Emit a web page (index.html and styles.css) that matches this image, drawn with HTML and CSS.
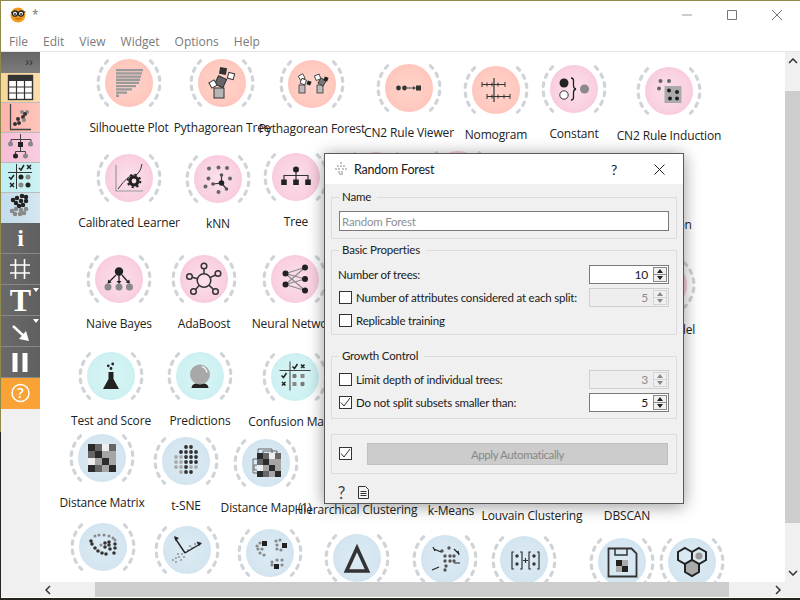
FILE: index.html
```html
<!DOCTYPE html>
<html lang="en">
<head>
  <meta charset="UTF-8" />
  <title>Orange</title>
  <link rel="stylesheet" href="styles.css">
</head>
<body>
  <svg class="defs" width="0" height="0">
    <defs>
      <g id="ring" fill="none" stroke="#d0d4d8" stroke-width="3.200" stroke-linecap="round" stroke-dasharray="3.400 5.900">
        <path d="M-21.400 -22.200A30.800 30.800 0 0 0 -21.400 22.200" />
        <path d="M21.400 -22.200A30.800 30.800 0 0 1 21.400 22.200" />
      </g>
    </defs>
  </svg>

  <div class="window">
    <div class="titlebar">
      <svg class="logo" viewBox="0 0 16 16" width="16" height="16">
        <circle cx="8" cy="8" r="7.5" fill="#f39a1e" />
        <circle cx="5" cy="6.6" r="2.6" fill="#fff" stroke="#222" stroke-width="1.3" />
        <circle cx="11" cy="6.6" r="2.6" fill="#fff" stroke="#222" stroke-width="1.3" />
        <path d="M1 5.6l2-.6M7.6 6.4h1M13.4 5.6l2-1" stroke="#222" fill="none" />
        <circle cx="5" cy="7" r="1" fill="#222" />
        <circle cx="11" cy="7" r="1" fill="#222" />
        <path d="M5.5 11.5q3 1.2 5.500 0" stroke="#b55f00" fill="none" />
      </svg>
      <span class="doc-name">*</span>
      <div class="win-controls">
        <svg viewBox="0 0 10 10" width="10" height="10"><path d="M0 5h10" stroke="#999" fill="none" /></svg>
        <svg viewBox="0 0 10 10" width="10" height="10"><path d="M.5.500h9v9h-9z" stroke="#777" fill="none" /></svg>
        <svg viewBox="0 0 10 10" width="10" height="10"><path d="M0 0l10 10M10 0l-10 10" stroke="#777" fill="none" /></svg>
      </div>
    </div>

    <div class="menubar">
      <span>File</span>
      <span>Edit</span>
      <span>View</span>
      <span>Widget</span>
      <span>Options</span>
      <span>Help</span>
    </div>

    <div class="main">
      <div class="toolbar">
        <div class="dock-head">››</div>
        <div class="cat cat-data">
          <svg viewBox="0 0 38 30" width="38" height="30">
            <rect x="7.500" y="2.500" width="24" height="24" fill="#fff" stroke="#333" stroke-width="1.4" />
            <rect x="7" y="2" width="25" height="6" fill="#333" />
            <path d="M15.500 8v18M23.500 8v18M8 14h23M8 20h23" stroke="#333" stroke-width="1.2" fill="none" />
          </svg>
        </div>
        <div class="cat cat-vis">
          <svg viewBox="0 0 38 30" width="38" height="30">
            <path d="M9.500 1v25.500H30" stroke="#444" stroke-width="1.3" fill="none" />
            <path class="dots" d="M14 21h0M18 20h0M17 16h0M22 14h0" stroke="#333" stroke-width="4" />
            <path class="dots" d="M21 9h0M26 9h0M23 17h0" stroke="#888" stroke-width="4" />
            <path class="dots" d="M24 11h0" stroke="#333" stroke-width="4" />
          </svg>
        </div>
        <div class="cat cat-model">
          <svg viewBox="0 0 38 30" width="38" height="30">
            <path d="M19.500 1v9M10 6.500h20V10M10 6.500V10M19.500 14v5M14.500 21v-2.500h10V21" stroke="#444" fill="none" />
            <rect x="17" y="9" width="5" height="5" fill="#222" />
            <path class="dots" d="M9.500 11h0M29.500 11h0M24.500 23h0" stroke="#888" stroke-width="5" />
            <path class="dots" d="M14.500 23h0" stroke="#222" stroke-width="5" />
          </svg>
        </div>
        <div class="cat cat-eval">
          <svg viewBox="0 0 38 30" width="38" height="30">
            <path d="M7 9.500h24M15.500 1v25" stroke="#333" fill="none" />
            <path d="M18 5l2 2 3-5M8 14l2 2 3-4" stroke="#222" stroke-width="1.500" fill="none" />
            <path d="M26 2l4 4M30 2l-4 4M9 20l4 4M13 20l-4 4" stroke="#222" stroke-width="1.500" fill="none" />
            <path class="dots" d="M20 14h0M27 22h0" stroke="#222" stroke-width="5" />
            <path class="dots" d="M27 14h0M20 22h0" stroke="#888" stroke-width="5" />
          </svg>
        </div>
        <div class="cat cat-unsup">
          <svg viewBox="0 0 38 30" width="38" height="30">
            <path class="dots" d="M12 7h0M16 5h0M21 3h0M25 4h0M15 10h0M20 8h0M25 8h0M18 13h0M22 12h0" stroke="#222" stroke-width="4.500" />
            <path class="dots" d="M11 18h0M15 16h0M20 17h0M25 16h0M14 21h0M19 21h0M23 20h0" stroke="#888" stroke-width="4.500" />
          </svg>
        </div>

        <div class="tool"><span class="glyph-i">i</span></div>
        <div class="tool">
          <svg viewBox="0 0 38 30" width="38" height="30"><path d="M14.500 5v20M23.500 5v20M9 11h20M9 19h20" stroke="#fff" stroke-width="1.600" fill="none" /></svg>
        </div>
        <div class="tool has-menu"><span class="glyph-t">T</span></div>
        <div class="tool has-menu">
          <svg viewBox="0 0 38 30" width="38" height="30"><path d="M12 10l13 12" stroke="#fff" stroke-width="2.400" fill="none" /><path d="M28 25l-3-10-7 8z" fill="#fff" /></svg>
        </div>
        <div class="tool">
          <svg viewBox="0 0 38 30" width="38" height="30"><path d="M11.500 6h5v19h-5zM21.500 6h5v19h-5z" fill="#fff" /></svg>
        </div>
        <div class="tool tool-help">
          <svg viewBox="0 0 38 30" width="38" height="30">
            <circle cx="19.500" cy="15" r="8.500" fill="none" stroke="#fff" stroke-width="1.500" />
            <text x="19.500" y="20" class="help-mark">?</text>
          </svg>
        </div>
      </div>

      <div class="canvas">
        <!-- row 1 -->
        <div class="node vis silhouette">
          <div class="disc"><svg class="ring" viewBox="-32 -32 64 64"><use href="#ring" /></svg>
            <svg class="icon" viewBox="0 0 48 48"><path d="M11 10h27v2.300H11zM11 13.200h26v2.300H11zM11 16.400h25v2.300H11zM11 19.600h24v2.300H11zM11 22.800h23v2.300H11zM11 26h20v2.300H11zM11 29.200h16v2.300H11zM11 32.400h11v2.300H11zM11 35.600h3v2.300h-3z" fill="#9a9a9a" /></svg>
          </div>
          <span class="node-label">Silhouette Plot</span>
        </div>
        <div class="node vis pytree">
          <div class="disc"><svg class="ring" viewBox="-32 -32 64 64"><use href="#ring" /></svg>
            <svg class="icon" viewBox="0 0 48 48">
              <rect x="16" y="29" width="10" height="10" fill="#b5b5b5" stroke="#333" />
              <rect x="18" y="18" width="9" height="9" fill="#666" stroke="#333" transform="rotate(25 22 23)" />
              <rect x="12" y="22" width="6" height="6" fill="#fff" stroke="#333" transform="rotate(-30 15 25)" />
              <rect x="21.500" y="8.500" width="7" height="7" fill="#333" transform="rotate(10 25 12)" />
              <rect x="30" y="14" width="6" height="6" fill="#fff" stroke="#333" transform="rotate(15 33 17)" />
            </svg>
          </div>
          <span class="node-label">Pythagorean Tree</span>
        </div>
        <div class="node vis pyforest">
          <div class="disc"><svg class="ring" viewBox="-32 -32 64 64"><use href="#ring" /></svg>
            <svg class="icon" viewBox="0 0 48 48">
              <rect x="11" y="25" width="6" height="8" fill="#bbb" stroke="#333" stroke-width=".8" />
              <rect x="11" y="15" width="5" height="5" fill="#fff" stroke="#333" stroke-width=".8" transform="rotate(-30 13 17)" />
              <rect x="13" y="19" width="5" height="5" fill="#fff" stroke="#333" stroke-width=".8" transform="rotate(20 15 21)" />
              <rect x="19" y="21" width="4" height="4" fill="#222" transform="rotate(20 21 23)" />
              <rect x="29" y="25" width="6" height="8" fill="#bbb" stroke="#333" stroke-width=".8" />
              <rect x="31" y="19" width="6" height="6" fill="#777" stroke="#333" stroke-width=".8" transform="rotate(30 34 22)" />
              <rect x="27" y="15" width="5" height="5" fill="#fff" stroke="#333" stroke-width=".8" transform="rotate(-20 29 17)" />
              <rect x="36" y="17" width="4" height="4" fill="#222" transform="rotate(20 38 19)" />
            </svg>
          </div>
          <span class="node-label">Pythagorean Forest</span>
        </div>
        <div class="node vis cn2viewer">
          <div class="disc"><svg class="ring" viewBox="-32 -32 64 64"><use href="#ring" /></svg>
            <svg class="icon" viewBox="0 0 48 48">
              <path class="dots" d="M13.500 24h0M19.500 24h0" stroke="#333" stroke-width="4.800" />
              <path d="M22 24h8" stroke="#444" fill="none" /><path d="M31 24l-3-2v4z" fill="#444" />
              <rect x="31" y="21.500" width="5" height="5" fill="#333" />
            </svg>
          </div>
          <span class="node-label">CN2 Rule Viewer</span>
        </div>
        <div class="node vis nomogram">
          <div class="disc"><svg class="ring" viewBox="-32 -32 64 64"><use href="#ring" /></svg>
            <svg class="icon" viewBox="0 0 48 48">
              <path d="M22 12v24M10 18.500h23M15 30.500h23" stroke="#333" stroke-width="1.200" fill="none" />
              <path d="M10 16v5M15 16.500v4M20 16.500v4M26 16.500v4M33 16v5M15 28v5M20 28.500v4M26 28.500v4M32 28.500v4M38 28v5" stroke="#333" fill="none" />
            </svg>
          </div>
          <span class="node-label">Nomogram</span>
        </div>
        <div class="node model constant">
          <div class="disc"><svg class="ring" viewBox="-32 -32 64 64"><use href="#ring" /></svg>
            <svg class="icon" viewBox="0 0 48 48">
              <circle cx="14" cy="18" r="4.500" fill="#222" />
              <circle cx="14" cy="30" r="4.200" fill="#fff" stroke="#333" />
              <path d="M21 13q2.500 0 2.500 2.500v5q0 3 2.500 3.500q-2.500.5-2.500 3.500v5q0 2.500-2.500 2.500" stroke="#222" stroke-width="1.300" fill="none" />
              <circle cx="34.500" cy="24" r="4.500" fill="#8a8a8a" />
            </svg>
          </div>
          <span class="node-label">Constant</span>
        </div>
        <div class="node model cn2induction">
          <div class="disc"><svg class="ring" viewBox="-32 -32 64 64"><use href="#ring" /></svg>
            <svg class="icon" viewBox="0 0 48 48">
              <rect x="19.500" y="19" width="17" height="17" fill="#aaa" />
              <path class="dots" d="M24 23.500h0M32 25h0M25 31.500h0M32 31.500h0" stroke="#222" stroke-width="4" />
              <path class="dots" d="M15.500 14h0M24 14h0M14 21.500h0" stroke="#666" stroke-width="4" />
            </svg>
          </div>
          <span class="node-label">CN2 Rule Induction</span>
        </div>

        <!-- row 2 -->
        <div class="node model calibrated">
          <div class="disc"><svg class="ring" viewBox="-32 -32 64 64"><use href="#ring" /></svg>
            <svg class="icon" viewBox="0 0 48 48">
              <path d="M11 11v26h27" stroke="#999" stroke-width="1.200" fill="none" />
              <path d="M13 35q10-14 16-14t8-11" stroke="#333" fill="none" />
              <circle cx="29" cy="27" r="4" fill="none" stroke="#222" stroke-width="3.200" />
              <circle cx="29" cy="27" r="6.300" fill="none" stroke="#222" stroke-width="2" stroke-dasharray="2.200 2.750" />
            </svg>
          </div>
          <span class="node-label">Calibrated Learner</span>
        </div>
        <div class="node model knn">
          <div class="disc"><svg class="ring" viewBox="-32 -32 64 64"><use href="#ring" /></svg>
            <svg class="icon" viewBox="0 0 48 48">
              <path d="M27.500 20v8l-8.500 1M27.500 28l5 6" stroke="#333" stroke-width="1.200" fill="none" />
              <path class="dots" d="M15 13.500h0M24.500 12.500h0M36 23.500h0M14.500 23.500h0M11.500 31.500h0M24.500 37h0M33 13h0" stroke="#666" stroke-width="4" />
              <path class="dots" d="M27.500 20h0M19 29h0M32.500 34h0" stroke="#555" stroke-width="3.600" />
              <path class="dots" d="M27.500 28h0" stroke="#222" stroke-width="5.500" />
            </svg>
          </div>
          <span class="node-label">kNN</span>
        </div>
        <div class="node model tree">
          <div class="disc"><svg class="ring" viewBox="-32 -32 64 64"><use href="#ring" /></svg>
            <svg class="icon" viewBox="0 0 48 48">
              <path d="M24 17v10M12 27v-4.500h24V27" stroke="#333" stroke-width="1.200" fill="none" />
              <circle cx="24" cy="16.500" r="3" fill="#222" />
              <path d="M9.200 26.500h5.600v5.600H9.200zM21.200 26.500h5.600v5.600h-5.600zM33.200 26.500h5.600v5.600h-5.600z" fill="#222" />
            </svg>
          </div>
          <span class="node-label">Tree</span>
        </div>
        <div class="node model random-forest">
          <div class="disc"><svg class="ring" viewBox="-32 -32 64 64"><use href="#ring" /></svg></div>
          <span class="node-label">Random Forest</span>
        </div>
        <div class="node model gradient">
          <div class="disc"><svg class="ring" viewBox="-32 -32 64 64"><use href="#ring" /></svg></div>
          <span class="node-label">Gradient Boosting</span>
        </div>
        <div class="node model logistic">
          <div class="disc"></div>
          <span class="node-label">Logistic Regression</span>
        </div>

        <!-- row 3 -->
        <div class="node model naive">
          <div class="disc"><svg class="ring" viewBox="-32 -32 64 64"><use href="#ring" /></svg>
            <svg class="icon" viewBox="0 0 48 48">
              <path d="M24 18v9M21 20l-7 7M27 20l6 7" stroke="#222" stroke-width="1.300" fill="none" />
              <path d="M24 29l-2.500-3h5zM12.500 28.500l.8-4 3.200 3.200zM35 28.500l-.8-4-3.200 3.200z" fill="#222" />
              <circle cx="24" cy="16.500" r="4.200" fill="#222" />
              <path class="dots" d="M13 32h0M24 32h0M34.500 32h0" stroke="#888" stroke-width="7" />
            </svg>
          </div>
          <span class="node-label">Naive Bayes</span>
        </div>
        <div class="node model ada">
          <div class="disc"><svg class="ring" viewBox="-32 -32 64 64"><use href="#ring" /></svg>
            <svg class="icon" viewBox="0 0 48 48" fill="none" stroke="#333" stroke-width="1.500">
              <circle cx="24" cy="25.500" r="6.800" />
              <circle cx="24" cy="11" r="2.800" /><circle cx="38" cy="18.500" r="2.800" /><circle cx="35.500" cy="36.500" r="2.800" /><circle cx="13.500" cy="36.500" r="2.800" /><circle cx="9.500" cy="21.500" r="2.800" />
              <path d="M24 14v4.700M35.500 20l-5.500 2.600M33.500 34.500l-4.500-4.400M15.500 34.500l4-4.200M12.500 22.300l4.800 1.500" />
            </svg>
          </div>
          <span class="node-label">AdaBoost</span>
        </div>
        <div class="node model neural">
          <div class="disc"><svg class="ring" viewBox="-32 -32 64 64"><use href="#ring" /></svg>
            <svg class="icon" viewBox="0 0 48 48">
              <path d="M14.500 18.500L34 12.500M14.500 18.500L34 24M14.500 18.500L34 35.500M14.500 29.500L34 12.500M14.500 29.500L34 24M14.500 29.500L34 35.500" stroke="#8a8a8a" stroke-width="1.200" fill="none" />
              <path class="dots" d="M14.500 18.500h0M14.500 29.500h0M34 12.500h0M34 24h0M34 35.500h0" stroke="#222" stroke-width="6" />
            </svg>
          </div>
          <span class="node-label">Neural Network</span>
        </div>
        <div class="node model load-model">
          <div class="disc"><svg class="ring" viewBox="-32 -32 64 64"><use href="#ring" /></svg></div>
          <span class="node-label">Load Model</span>
        </div>

        <!-- row 4 -->
        <div class="node eval test">
          <div class="disc"><svg class="ring" viewBox="-32 -32 64 64"><use href="#ring" /></svg>
            <svg class="icon" viewBox="0 0 48 48">
              <path d="M21.500 20h5v7l5.500 10h-16l5.500-10z" fill="#222" />
              <path class="dots" d="M25.700 12h0M21.300 13.800h0M24 16.500h0" stroke="#222" stroke-width="2.800" />
            </svg>
          </div>
          <span class="node-label">Test and Score</span>
        </div>
        <div class="node eval predictions">
          <div class="disc"><svg class="ring" viewBox="-32 -32 64 64"><use href="#ring" /></svg>
            <svg class="icon" viewBox="0 0 48 48">
              <path d="M15.500 36q0-5 8.500-5t8.500 5z" fill="#222" />
              <circle cx="24" cy="22.500" r="10" fill="#a8a8a8" />
              <path d="M26 14.500q4 1.500 5 6" stroke="#eee" stroke-width="1.500" fill="none" />
            </svg>
          </div>
          <span class="node-label">Predictions</span>
        </div>
        <div class="node eval confusion">
          <div class="disc"><svg class="ring" viewBox="-32 -32 64 64"><use href="#ring" /></svg>
            <svg class="icon" viewBox="0 0 48 48">
              <path d="M8.500 17.500h31M19 8.500v29" stroke="#444" fill="none" />
              <path d="M21.500 13.500l2 2 3-4.500M10.500 22.500l2 2 3-4.500" stroke="#222" stroke-width="1.500" fill="none" />
              <path d="M30 11.500l3.500 3.500M33.500 11.500L30 15M11 29l3.500 3.500M14.500 29L11 32.500" stroke="#222" stroke-width="1.500" fill="none" />
              <path class="dots" d="M23.500 23h0M31.500 31h0" stroke="#777" stroke-width="4.400" />
              <path d="M29.500 21h4v4h-4zM21.500 29h4v4h-4z" fill="#888" />
            </svg>
          </div>
          <span class="node-label">Confusion Matrix</span>
        </div>

        <!-- row 5 -->
        <div class="node unsup distmatrix">
          <div class="disc"><svg class="ring" viewBox="-32 -32 64 64"><use href="#ring" /></svg>
            <svg class="icon" viewBox="0 0 48 48" shape-rendering="crispEdges">
              <path d="M10 10h7v7h-7zM24 17h-7v7h7zM24 24h7v7h-7zM10 31h7v7h-7zM31 31h7v7h-7z" fill="#2b2b2b" />
              <path d="M17 10h7v7h-7zM31 10h7v7h-7zM10 17h7v7h-7zM17 31h7v7h-7z" fill="#666" />
              <path d="M24 17h7v7h-7zM17 24h7v7h-7zM24 31h7v7h-7zM31 17h7v7h-7zM31 24h7v7h-7z" fill="#a5a5a5" />
              <path d="M24 10h7v7h-7zM10 24h7v7h-7z" fill="#eee" />
            </svg>
          </div>
          <span class="node-label">Distance Matrix</span>
        </div>
        <div class="node unsup tsne">
          <div class="disc"><svg class="ring" viewBox="-32 -32 64 64"><use href="#ring" /></svg>
            <svg class="icon" viewBox="0 0 48 48">
              <path class="dots" d="M24 10h0M29 10h0M19 15h0M24 15h0M29 15h0M34 15h0M24 20h0M29 20h0M34 20h0M24 25h0M29 25h0M34 25h0M24 30h0M24 35h0M29 35h0" stroke="#333" stroke-width="3.800" />
              <path class="dots" d="M14 20h0M19 20h0M14 25h0M19 25h0M14 30h0M19 30h0M29 30h0M34 30h0M19 35h0" stroke="#aaa" stroke-width="3.800" />
            </svg>
          </div>
          <span class="node-label">t-SNE</span>
        </div>
        <div class="node unsup distmap">
          <div class="disc"><svg class="ring" viewBox="-32 -32 64 64"><use href="#ring" /></svg>
            <svg class="icon" viewBox="0 0 48 48">
              <path d="M16 14v-4h14v4M21 14v-2h14v2M15 20h-4v14h4M15 26h-3v5h3" stroke="#666" fill="none" />
              <g shape-rendering="crispEdges">
                <path d="M15 14h6v6h-6zM21 20h6v6h-6zM27 26h6v6h-6zM15 32h6v6h-6zM33 32h6v6h-6z" fill="#2b2b2b" />
                <path d="M21 14h6v6h-6zM33 14h6v6h-6zM15 20h6v6h-6zM21 32h6v6h-6z" fill="#666" />
                <path d="M27 20h6v6h-6zM21 26h6v6h-6zM27 32h6v6h-6zM33 20h6v6h-6zM33 26h6v6h-6z" fill="#a5a5a5" />
                <path d="M27 14h6v6h-6zM15 26h6v6h-6z" fill="#eee" />
              </g>
            </svg>
          </div>
          <span class="node-label">Distance Map (1)</span>
        </div>
        <div class="node unsup hier">
          <div class="disc"><svg class="ring" viewBox="-32 -32 64 64"><use href="#ring" /></svg></div>
          <span class="node-label">Hierarchical Clustering</span>
        </div>
        <div class="node unsup kmeans">
          <div class="disc"></div>
          <span class="node-label">k-Means</span>
        </div>
        <div class="node unsup louvain">
          <div class="disc"></div>
          <span class="node-label">Louvain Clustering</span>
        </div>
        <div class="node unsup dbscan">
          <div class="disc"></div>
          <span class="node-label">DBSCAN</span>
        </div>

        <!-- row 6, cut off by the scrollbar -->
        <div class="node unsup manifold">
          <div class="disc"><svg class="ring" viewBox="-32 -32 64 64"><use href="#ring" /></svg>
            <svg class="icon" viewBox="0 0 48 48">
              <path class="dots" d="M12 18h0M13 21h0M16 25h0M19 28h0M23 30h0M27 31h0M26 24h0M30 22h0M26 20h0M30 19h0M35 30h0M36 25h0M36 21h0M31 26h0" stroke="#333" stroke-width="3.600" />
              <path class="dots" d="M16 13h0M20 12h0M25 12h0M30 13h0M34 15h0M36 17h0M22 22h0" stroke="#888" stroke-width="3" />
            </svg>
          </div>
        </div>
        <div class="node unsup pca">
          <div class="disc"><svg class="ring" viewBox="-32 -32 64 64"><use href="#ring" /></svg>
            <svg class="icon" viewBox="0 0 48 48">
              <path class="dots" d="M10 34h0M13 32h0M16 31h0M15 28h0M19 28h0M22 26h0M25 24h0M29 22h0M27 20h0M32 18h0M35 17h0M21 31h0M18 34h0M13 36h0" stroke="#999" stroke-width="2.200" />
              <path d="M22 27L12 12M22 27l15-9" stroke="#222" stroke-width="1.400" fill="none" />
              <path d="M11 10l5 2-3.500 3zM39 17l-5.500-1.500 2.500 4.500z" fill="#222" />
            </svg>
          </div>
        </div>
        <div class="node unsup mds">
          <div class="disc"><svg class="ring" viewBox="-32 -32 64 64"><use href="#ring" /></svg>
            <svg class="icon" viewBox="0 0 48 48">
              <path class="dots" d="M11 17h0M14 14h0M12 20h0M16 20h0M14 24h0M18 26h0M30 12h0M34 11h0M31 16h0M35 21h0M31 20h0M26 33h0M31 31h0M36 31h0M26 36h0M36 36h0" stroke="#888" stroke-width="3.200" />
              <path d="M16 12h5v5h-5zM36 14h5v5h-5zM28 35h5v5h-5z" fill="#222" />
            </svg>
          </div>
        </div>
        <div class="node unsup delta">
          <div class="disc"><svg class="ring" viewBox="-32 -32 64 64"><use href="#ring" /></svg>
            <svg class="icon" viewBox="0 0 48 48"><path d="M24 14L13.500 37h21z" fill="none" stroke="#333" stroke-width="3.600" /></svg>
          </div>
        </div>
        <div class="node unsup kgroup">
          <div class="disc"><svg class="ring" viewBox="-32 -32 64 64"><use href="#ring" /></svg>
            <svg class="icon" viewBox="0 0 48 48">
              <path class="dots" d="M21 16h0M28 13h0M24 21h0M29 21h0M33 21h0M24 26h0M29 26h0M33 26h0M25 31h0M24 35h0" stroke="#555" stroke-width="3.400" />
              <path d="M13 14l7 3M12 12l2 4M33 14l5 5M38 20l-1-4M18 32l-7 3M33 28h6" stroke="#222" stroke-width="1.200" fill="none" />
            </svg>
          </div>
        </div>
        <div class="node unsup bracket">
          <div class="disc"><svg class="ring" viewBox="-32 -32 64 64"><use href="#ring" /></svg>
            <svg class="icon" viewBox="0 0 48 48">
              <path d="M14 16h-2v17h2M20 16h2v17h-2M31 16h-2v17h2M37 16h2v17h-2M23 24.500h5M25.500 22v5" stroke="#333" stroke-width="1.200" fill="none" />
              <path class="dots" d="M17 20h0M17 28h0M34 20h0M34 28h0" stroke="#333" stroke-width="3.400" />
            </svg>
          </div>
        </div>
        <div class="node unsup savedata">
          <div class="disc"><svg class="ring" viewBox="-32 -32 64 64"><use href="#ring" /></svg>
            <svg class="icon" viewBox="0 0 48 48">
              <path d="M10.500 10.500h23l5 5v23h-28z" fill="none" stroke="#333" stroke-width="1.800" />
              <path d="M17 10v7h12v-7" fill="none" stroke="#333" stroke-width="1.500" />
              <path d="M18 22h6v6h-6zM24 28h6v6h-6z" fill="#222" />
              <path d="M24 22h6v6h-6zM18 28h6v6h-6z" fill="#aaa" />
            </svg>
          </div>
        </div>
        <div class="node unsup hexes">
          <div class="disc"><svg class="ring" viewBox="-32 -32 64 64"><use href="#ring" /></svg>
            <svg class="icon" viewBox="0 0 48 48">
              <path d="M17 10l7 4v8l-7 4-7-4v-8z" fill="none" stroke="#222" stroke-width="2" />
              <path d="M31 10l7 4v8l-7 4-7-4v-8z" fill="none" stroke="#222" stroke-width="2" />
              <path d="M24 22l7 4v8l-7 4-7-4v-8z" fill="#aaa" stroke="#222" stroke-width="2" />
              <circle cx="31" cy="18" r="3.600" fill="#999" />
            </svg>
          </div>
        </div>
      </div>

      <div class="vscroll">
        <div class="arrow-box"><svg viewBox="0 0 10 6" width="10" height="6"><path d="M1 5l4-4 4 4" stroke="#333" stroke-width="1.500" fill="none" /></svg></div>
        <div class="vthumb"></div>
        <div class="vtrough"></div>
        <div class="arrow-box"><svg viewBox="0 0 10 6" width="10" height="6"><path d="M1 1l4 4 4-4" stroke="#333" stroke-width="1.500" fill="none" /></svg></div>
      </div>

      <div class="hscroll">
        <div class="arrow-box"><svg viewBox="0 0 6 10" width="6" height="10"><path d="M5 1L1 5l4 4" stroke="#333" stroke-width="1.500" fill="none" /></svg></div>
        <div class="htrough-left"></div>
        <div class="hthumb"></div>
        <div class="htrough-right"></div>
        <div class="arrow-box"><svg viewBox="0 0 6 10" width="6" height="10"><path d="M1 1l4 4-4 4" stroke="#333" stroke-width="1.500" fill="none" /></svg></div>
      </div>
      <div class="corner"></div>
    </div>
  </div>

  <!-- widget dialog floating over the canvas -->
  <div class="dialog">
    <div class="dialog-title">
      <svg class="dialog-icon" viewBox="0 0 14 14" width="14" height="14">
        <path class="dots" d="M7 1h0M4 4h0M7 4h0M10 4h0M2 7h0M5 7h0M9 7h0M12 7h0M5 10h0M8 10h0M6 12h0M8 12h0" stroke="#777" stroke-width="1.600" />
      </svg>
      <span class="dialog-name">Random Forest</span>
      <span class="dialog-help">?</span>
      <svg class="dialog-close" viewBox="0 0 11 11" width="11" height="11"><path d="M.5.500l10 10M10.500.500l-10 10" stroke="#222" fill="none" /></svg>
    </div>

    <div class="dialog-body">
      <fieldset class="group group-name">
        <legend>Name</legend>
        <input class="name-input" type="text" placeholder="Random Forest" />
      </fieldset>

      <fieldset class="group group-basic">
        <legend>Basic Properties</legend>
        <div class="row">
          <label class="plain-label">Number of trees:</label>
          <div class="spin">
            <span class="spin-value">10</span>
            <div class="spin-btns"><span class="up"></span><span class="down"></span></div>
          </div>
        </div>
        <div class="row">
          <label class="check-label"><span class="check"></span>Number of attributes considered at each split:</label>
          <div class="spin disabled">
            <span class="spin-value">5</span>
            <div class="spin-btns"><span class="up"></span><span class="down"></span></div>
          </div>
        </div>
        <div class="row">
          <label class="check-label"><span class="check"></span>Replicable training</label>
        </div>
      </fieldset>

      <fieldset class="group group-growth">
        <legend>Growth Control</legend>
        <div class="row">
          <label class="check-label"><span class="check"></span>Limit depth of individual trees:</label>
          <div class="spin disabled">
            <span class="spin-value">3</span>
            <div class="spin-btns"><span class="up"></span><span class="down"></span></div>
          </div>
        </div>
        <div class="row">
          <label class="check-label">
            <span class="check"><svg viewBox="0 0 11 11" width="11" height="11"><path d="M1 5.500l3 3.500 6-8" stroke="#333" fill="none" /></svg></span>Do not split subsets smaller than:
          </label>
          <div class="spin">
            <span class="spin-value">5</span>
            <div class="spin-btns"><span class="up"></span><span class="down"></span></div>
          </div>
        </div>
      </fieldset>

      <div class="apply-box">
        <span class="check"><svg viewBox="0 0 11 11" width="11" height="11"><path d="M1 5.500l3 3.500 6-8" stroke="#333" fill="none" /></svg></span>
        <button class="apply-btn" disabled>Apply Automatically</button>
      </div>

      <div class="dialog-foot">
        <span class="foot-help">?</span>
        <svg viewBox="0 0 11 13" width="11" height="13">
          <path d="M.5.500h7l3 3v9h-10z" fill="#f4f4f4" stroke="#333" />
          <path d="M2.500 5.500h6M2.500 7.500h6M2.500 9.500h6" stroke="#333" fill="none" />
        </svg>
      </div>
    </div>
  </div>
</body>
</html>
```

FILE: styles.css
```css
* {
  box-sizing: border-box;
}
html, body {
  margin: 0;
  padding: 0;
}
body {
  width: 800px;
  height: 600px;
  overflow: hidden;
  position: relative;
  font-family: "Open Sans", "Noto Sans", sans-serif;
  font-size: 12px;
  color: #1a1a1a;
  background: linear-gradient(#8f8a4a 0, #8f8a4a 432px, #26241c 432px);
}
.defs {
  position: absolute;
}

/* main window */
.window {
  position: absolute;
  left: 1px;
  top: 1px;
  width: 799px;
  height: 597px;
  background: #fff;
  display: flex;
  flex-direction: column;
}
.titlebar {
  height: 29px;
  display: flex;
  align-items: center;
  padding-left: 9px;
  padding-bottom: 2px;
  background: #fff;
}
.logo {
  margin-right: 6px;
}
.doc-name {
  color: #777;
  font-size: 12px;
}
.win-controls {
  margin-left: auto;
  display: flex;
  gap: 35px;
  padding-right: 18px;
}
.menubar {
  height: 22px;
  display: flex;
  align-items: center;
  padding-left: 8px;
  padding-top: 1px;
  color: #7a7a7a;
  border-bottom: 1px solid #e6e6e6;
}
.menubar span {
  margin-right: 15px;
}
.main {
  flex: 1;
  display: grid;
  grid-template-columns: 39px 745px 15px;
  grid-template-rows: 530px 15px;
}

/* left dock */
.toolbar {
  grid-row: 1 / 3;
  background: #f0f0f0;
  display: flex;
  flex-direction: column;
}
.dock-head {
  height: 21px;
  background: linear-gradient(#666, #7c7c7c);
  color: #333;
  font-size: 13px;
  line-height: 18px;
  text-align: right;
  padding-right: 7px;
}
.cat {
  height: 30px;
  border-bottom: 1px solid #bbb;
}
.cat svg, .tool svg {
  display: block;
}
.cat-data { background: linear-gradient(90deg, #f9d69b, #fbdcab); }
.cat-vis { background: linear-gradient(90deg, #fcb4aa, #ffc4ba); }
.cat-model { background: linear-gradient(90deg, #f6bdd6, #f9cde0); }
.cat-eval { background: linear-gradient(90deg, #bfeff0, #cdf2f3); }
.cat-unsup { background: linear-gradient(90deg, #c3dcec, #d4e6f1); border-bottom: none; }
.tool {
  height: 31px;
  position: relative;
  background: linear-gradient(90deg, #6a6a6a, #5f5f5f);
  border-bottom: 1px solid #888;
  color: #fff;
  text-align: center;
}
.glyph-i {
  font-family: "Liberation Serif", serif;
  font-weight: bold;
  font-size: 24px;
  line-height: 30px;
}
.glyph-t {
  font-family: "Liberation Serif", serif;
  font-weight: bold;
  font-size: 32px;
  line-height: 30px;
}
.has-menu::after {
  content: "";
  position: absolute;
  right: 1px;
  top: 3px;
  border-left: 3px solid transparent;
  border-right: 3px solid transparent;
  border-top: 4px solid #fff;
}
.tool-help {
  background: #f9a235;
  border-bottom: none;
}
.help-mark {
  fill: #fff;
  font-size: 15px;
  font-weight: 600;
  text-anchor: middle;
}

/* scheme canvas */
.canvas {
  position: relative;
  overflow: hidden;
  background: #fff;
}
.node {
  position: absolute;
  width: 140px;
  display: flex;
  flex-direction: column;
  align-items: center;
}
.disc {
  position: relative;
  width: 48px;
  height: 48px;
  border-radius: 50%;
  flex: none;
}
.vis .disc { background: radial-gradient(circle, #ffd3cb 0, #ffc9bf 60%, #fbb7ad 100%); }
.model .disc { background: radial-gradient(circle, #fce0ec 0, #f9d0e1 60%, #f5bcd5 100%); }
.eval .disc { background: radial-gradient(circle, #d8f5f5 0, #cff1f2 60%, #c0ecee 100%); }
.unsup .disc { background: radial-gradient(circle, #dcebf4 0, #d5e6f1 60%, #c6deec 100%); }
.ring {
  position: absolute;
  left: -8px;
  top: -8px;
  width: 64px;
  height: 64px;
  overflow: visible;
}
.icon {
  position: absolute;
  left: 0;
  top: 0;
  width: 48px;
  height: 48px;
}
.dots {
  fill: none;
  stroke-linecap: round;
}
.node-label {
  margin-top: 13px;
  line-height: 16px;
  letter-spacing: -0.15px;
  white-space: nowrap;
  color: #222;
}

/* node places on the canvas */
.silhouette { left: 19px; top: 7px; }
.pytree { left: 112px; top: 7px; }
.pyforest { left: 202px; top: 8px; }
.cn2viewer { left: 299px; top: 12px; }
.nomogram { left: 386px; top: 14px; }
.constant { left: 464px; top: 13px; }
.cn2induction { left: 559px; top: 15px; }
.calibrated { left: 19px; top: 102px; }
.knn { left: 108px; top: 103px; }
.tree { left: 186px; top: 101px; }
.random-forest { left: 266px; top: 100px; }
.gradient { left: 348px; top: 99px; }
.logistic { left: 530px; top: 104px; }
.naive { left: 9px; top: 203px; }
.ada { left: 94px; top: 203px; }
.neural { left: 185px; top: 203px; }
.load-model { left: 553px; top: 209px; }
.test { left: 1px; top: 300px; }
.predictions { left: 90px; top: 300px; }
.confusion { left: 185px; top: 301px; }
.distmatrix { left: -8px; top: 382px; }
.tsne { left: 76px; top: 385px; }
.distmap { left: 156px; top: 387px; }
.hier { left: 246px; top: 389px; }
.kmeans { left: 341px; top: 390px; }
.louvain { left: 422px; top: 395px; }
.dbscan { left: 517px; top: 395px; }
.manifold { left: -7px; top: 471px; }
.pca { left: 77px; top: 474px; }
.mds { left: 160px; top: 477px; }
.delta { left: 247px; top: 482px; }
.kgroup { left: 335px; top: 483px; }
.bracket { left: 414px; top: 484px; }
.savedata { left: 512px; top: 486px; }
.hexes { left: 582px; top: 486px; }

/* scrollbars */
.vscroll {
  background: #f0f0f0;
  display: flex;
  flex-direction: column;
}
.arrow-box {
  width: 15px;
  height: 15px;
  flex: none;
  display: flex;
  align-items: center;
  justify-content: center;
}
.vscroll .arrow-box:first-child {
  height: 18px;
  margin-bottom: 21px;
}
.vscroll .arrow-box:last-child {
  height: 19px;
}
.vthumb {
  height: 432px;
  background: #cdcdcd;
}
.vtrough {
  flex: 1;
}
.hscroll {
  grid-column: 2;
  background: #f0f0f0;
  display: flex;
  align-items: stretch;
}
.htrough-left {
  width: 40px;
}
.hthumb {
  width: 634px;
  background: #cdcdcd;
}
.htrough-right {
  flex: 1;
}
.corner {
  background: #f0f0f0;
}

/* Random Forest dialog */
.dialog {
  position: absolute;
  left: 324px;
  top: 153px;
  width: 360px;
  height: 351px;
  background: #f0f0f0;
  border: 1px solid #5a5a5a;
  box-shadow: 0 2px 16px rgba(0, 0, 0, 0.4);
  display: flex;
  flex-direction: column;
  font-family: Lato, "Open Sans", sans-serif;
  font-size: 11.5px;
  letter-spacing: -0.2px;
}
.dialog-title {
  height: 30px;
  background: #fff;
  display: flex;
  align-items: center;
  padding-left: 9px;
  flex: none;
}
.dialog-icon {
  margin-right: 6px;
}
.dialog-name {
  font-size: 12.5px;
}
.dialog-help {
  margin-left: auto;
  margin-right: 37px;
  font-size: 14px;
}
.dialog-close {
  margin-right: 18px;
}
.dialog-body {
  flex: 1;
  padding: 6px 6px 0;
  display: flex;
  flex-direction: column;
}
.group {
  margin: 0;
  padding: 0 7px;
  min-width: 0;
  border: 1px solid #dcdcdc;
}
.group legend {
  margin-left: 0;
  padding: 0 6px 0 3px;
  line-height: 14px;
  color: #222;
}
.group-name {
  padding-top: 7px;
  padding-bottom: 7px;
}
.group-basic {
  margin-top: 4px;
  padding-top: 8px;
  padding-bottom: 4px;
}
.group-growth {
  margin-top: 14px;
  padding-top: 7px;
  padding-bottom: 6px;
}
.name-input {
  display: block;
  width: 100%;
  height: 20px;
  padding: 0 2px;
  border: 1px solid #7a7a7a;
  background: #fff;
  font-family: inherit;
  font-size: 11.5px;
  letter-spacing: -0.2px;
}
.name-input::placeholder {
  color: #8f8f8f;
  opacity: 1;
}
.row {
  height: 19px;
  margin-bottom: 4px;
  display: flex;
  align-items: center;
  justify-content: space-between;
}
.row:last-child {
  margin-bottom: 0;
}
.plain-label {
  margin-left: -1px;
}
.check-label {
  display: flex;
  align-items: center;
  white-space: nowrap;
}
.check {
  width: 13px;
  height: 13px;
  flex: none;
  margin-right: 4px;
  background: #fff;
  border: 1px solid #333;
  display: flex;
  align-items: center;
  justify-content: center;
}
.spin {
  width: 80px;
  height: 19px;
  flex: none;
  display: flex;
  align-items: center;
  justify-content: flex-end;
  background: #fff;
  border: 1px solid #7a7a7a;
  font-size: 12px;
}
.spin-value {
  margin-right: 5px;
}
.spin-btns {
  width: 14px;
  height: 15px;
  margin-right: 1px;
  display: flex;
  flex-direction: column;
  border: 1px solid #8a8a8a;
  background: #f0f0f0;
}
.spin-btns span {
  flex: 1;
  display: flex;
  align-items: center;
  justify-content: center;
}
.spin-btns .up::before {
  content: "";
  border-left: 3px solid transparent;
  border-right: 3px solid transparent;
  border-bottom: 4px solid #222;
}
.spin-btns .down {
  border-top: 1px solid #8a8a8a;
}
.spin-btns .down::before {
  content: "";
  border-left: 3px solid transparent;
  border-right: 3px solid transparent;
  border-top: 4px solid #222;
}
.spin.disabled {
  background: #eeeeee;
  border-color: #cfcfcf;
  color: #8c8c8c;
}
.spin.disabled .spin-btns {
  border-color: #d4d4d4;
}
.spin.disabled .down {
  border-top-color: #d4d4d4;
}
.spin.disabled .up::before {
  border-bottom-color: #888;
}
.spin.disabled .down::before {
  border-top-color: #888;
}
.apply-box {
  margin-top: 15px;
  height: 40px;
  border: 1px solid #dcdcdc;
  display: flex;
  align-items: center;
  padding-left: 7px;
}
.apply-box .check {
  margin-right: 15px;
  margin-top: -2px;
}
.apply-btn {
  width: 301px;
  height: 22px;
  background: #cccccc;
  border: 1px solid #c0c0c0;
  color: #888;
  font-family: inherit;
  font-size: 11.5px;
  letter-spacing: -0.4px;
  padding: 0;
}
.dialog-foot {
  flex: 1;
  display: flex;
  align-items: center;
  gap: 11px;
  padding-left: 5px;
  padding-top: 7px;
}
.foot-help {
  width: 11px;
  font-size: 17px;
  color: #444;
  text-align: center;
}
```
